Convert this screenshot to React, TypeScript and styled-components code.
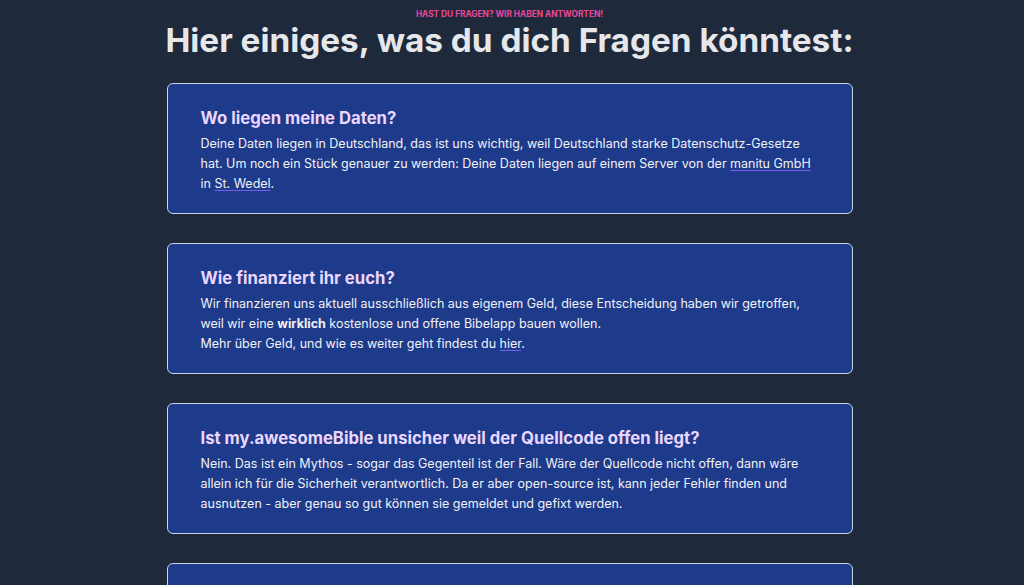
import React from "react";
import styled, { createGlobalStyle } from "styled-components";

const Global = createGlobalStyle`
  html, body { margin: 0; padding: 0; background: #1e293b; }
  body { font-family: Inter, "Noto Sans", sans-serif; -webkit-font-smoothing: antialiased; }
`;

const Page = styled.main`
  display: flex;
  flex-direction: column;
  align-items: center;
  padding: 8px 0 40px;
  margin-left: -5px;
`;

const Eyebrow = styled.p`
  margin: 0;
  color: #ec4899;
  font-size: 8.3px;
  line-height: 12px;
  font-weight: 700;
  text-transform: uppercase;
`;

const Title = styled.h1`
  margin: 0;
  color: #e5e7eb;
  font-size: 33.3px;
  line-height: 40px;
  font-weight: 700;
`;

const List = styled.div`
  display: flex;
  flex-direction: column;
  gap: 29px;
  width: 686px;
  margin-top: 23px;
`;

const Card = styled.section`
  box-sizing: border-box;
  height: 131px;
  background: #1e3a8a;
  border: 1px solid #cbd5e1;
  border-radius: 6px;
  padding: 20px 30px 20px 33px;
`;

const Question = styled.h2`
  margin: 0 0 2px;
  color: #ead6ff;
  font-size: 16.7px;
  line-height: 28px;
  font-weight: 700;
`;

const Answer = styled.p`
  margin: 0;
  color: #f1f2f6;
  font-size: 12.5px;
  line-height: 20px;
`;

const Link = styled.a`
  color: inherit;
  text-decoration: underline;
  text-decoration-color: #7c5cf0;
  text-decoration-thickness: 1px;
  text-underline-offset: 2px;
`;

export default function App() {
  return (
    <>
      <Global />
      <Page>
        <Eyebrow>Hast du Fragen? Wir haben Antworten!</Eyebrow>
        <Title>Hier einiges, was du dich Fragen könntest:</Title>
        <List>
          <Card>
            <Question>Wo liegen meine Daten?</Question>
            <Answer>
              Deine Daten liegen in Deutschland, das ist uns wichtig, weil Deutschland starke Datenschutz-Gesetze
              hat. Um noch ein Stück genauer zu werden: Deine Daten liegen auf einem Server von der{" "}
              <Link href="#">manitu GmbH</Link> in <Link href="#">St. Wedel</Link>.
            </Answer>
          </Card>
          <Card>
            <Question>Wie finanziert ihr euch?</Question>
            <Answer>
              Wir finanzieren uns aktuell ausschließlich aus eigenem Geld, diese Entscheidung haben wir getroffen,
              weil wir eine <strong>wirklich</strong> kostenlose und offene Bibelapp bauen wollen.
              <br />
              Mehr über Geld, und wie es weiter geht findest du <Link href="#">hier</Link>.
            </Answer>
          </Card>
          <Card>
            <Question>Ist my.awesomeBible unsicher weil der Quellcode offen liegt?</Question>
            <Answer>
              Nein. Das ist ein Mythos - sogar das Gegenteil ist der Fall. Wäre der Quellcode nicht offen, dann wäre
              allein ich für die Sicherheit verantwortlich. Da er aber open-source ist, kann jeder Fehler finden und
              ausnutzen - aber genau so gut können sie gemeldet und gefixt werden.
            </Answer>
          </Card>
          <Card>
            <Question>Kann ich mithelfen?</Question>
          </Card>
        </List>
      </Page>
    </>
  );
}
